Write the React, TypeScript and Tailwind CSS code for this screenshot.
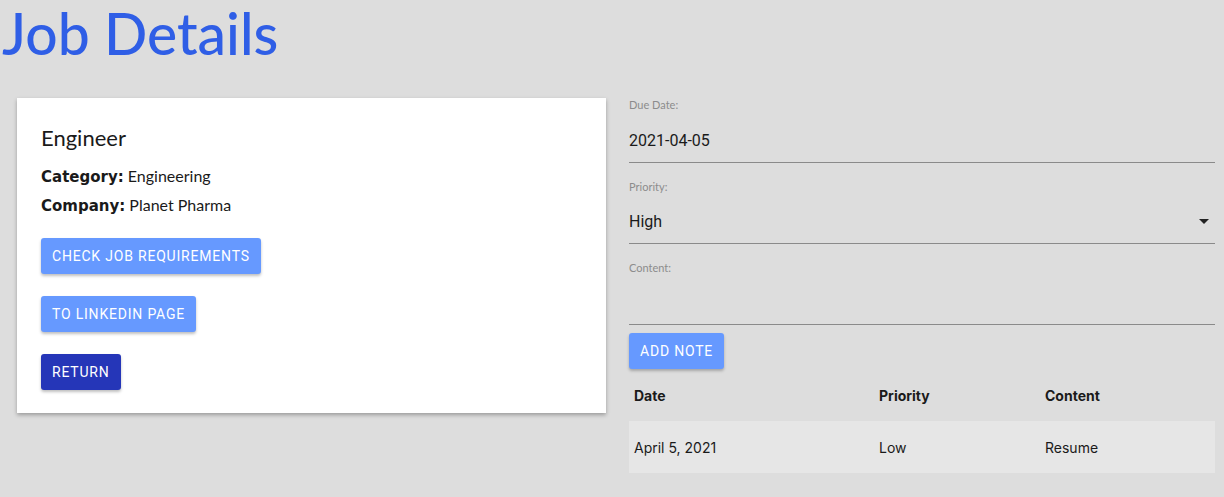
import React from 'react';

const gill = { fontFamily: '"Lato", "Open Sans", sans-serif' };
const heavy = { fontFamily: '"DejaVu Sans", "Lato", sans-serif' };

const Field = ({ label, value, rowClass, select }: { label: string; value?: string; rowClass: string; select?: boolean }) => (
  <div className="border-b border-[#8a8a8a]">
    <div className="text-[11px] text-[#8c8c8c] leading-[14px]" style={gill}>{label}</div>
    <div className={`flex items-center justify-between ${rowClass}`}>
      <span className="text-[16px] text-[#1a1a1a]">{value}</span>
      {select && (
        <svg width="10" height="5" viewBox="0 0 10 5" className="mr-[6px]">
          <path d="M0 0h10L5 5z" fill="#222" />
        </svg>
      )}
    </div>
  </div>
);

const Btn = ({ children, dark }: { children: React.ReactNode; dark?: boolean }) => (
  <button
    className={`h-[36px] px-[11px] rounded-[3px] text-white text-[14px] font-normal tracking-[0.8px] uppercase shadow-[0_2px_3px_rgba(0,0,0,0.25)] ${dark ? 'bg-[#2536b8]' : 'bg-[#6699ff]'}`}
  >
    {children}
  </button>
);

export default function App() {
  return (
    <div className="min-h-[497px] bg-[#dddddd] pb-6" style={{ fontFamily: 'Roboto, "Liberation Sans", sans-serif' }}>
      <h1 className="text-[57px] leading-[66px] font-medium text-[#2f5ee6] pl-[2px] h-[98px]" style={gill}>
        Job Details
      </h1>
      <div className="flex pl-[17px] pr-[9px]">
        <div className="w-[589px] h-[315px] bg-white shadow-[0_2px_4px_rgba(0,0,0,0.3)] px-[24px] pt-[27px]">
          <div className="text-[22px] text-[#1a1a1a] leading-[26px]" style={gill}>Engineer</div>
          <div className="mt-[11px] text-[16px] leading-[27px] text-[#1a1a1a]" style={gill}>
            <div><span className="font-bold text-[15px]" style={heavy}>Category:</span> Engineering</div>
            <div><span className="font-bold text-[15px]" style={heavy}>Company:</span> Planet Pharma</div>
          </div>
          <div className="flex flex-col items-start gap-[22px] mt-[18px]">
            <Btn>Check Job Requirements</Btn>
            <Btn>To LinkedIn Page</Btn>
            <Btn dark>Return</Btn>
          </div>
        </div>
        <div className="flex-1 ml-[23px]">
          <Field label="Due Date:" value="2021-04-05" rowClass="h-[50px] pt-[8px]" />
          <div className="mt-[17px]">
            <Field label="Priority:" value="High" rowClass="h-[49px] pt-[6px]" select />
          </div>
          <div className="mt-[17px]">
            <Field label="Content:" rowClass="h-[49px]" />
          </div>
          <div className="mt-[8px]">
            <Btn>Add Note</Btn>
          </div>
          <table className="w-full text-[14px] text-[#1a1a1a] border-collapse" style={{ fontFamily: 'Inter, sans-serif' }}>
            <thead>
              <tr className="h-[52px] text-left">
                <th className="font-bold pl-[5px] w-[250px]">Date</th>
                <th className="font-bold w-[166px]">Priority</th>
                <th className="font-bold">Content</th>
              </tr>
            </thead>
            <tbody>
              <tr className="h-[52px] bg-[#e6e6e6]">
                <td className="pl-[5px]">April 5, 2021</td>
                <td>Low</td>
                <td>Resume</td>
              </tr>
            </tbody>
          </table>
        </div>
      </div>
    </div>
  );
}
